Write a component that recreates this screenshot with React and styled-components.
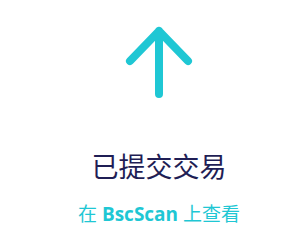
import React from "react";
import styled, { createGlobalStyle } from "styled-components";

const GlobalStyle = createGlobalStyle`
  html, body {
    margin: 0;
    padding: 0;
    background: #ffffff;
  }
`;

const Main = styled.div`
  display: flex;
  flex-direction: column;
  align-items: center;
  width: 308px;
  height: 241px;
  box-sizing: border-box;
  padding: 23px 0 0 10px;
  background: #ffffff;
`;

const ArrowIcon = styled.svg`
  display: block;
  width: 80px;
  height: 80px;
`;

const Title = styled.div`
  margin-top: 49px;
  font-family: "Noto Sans CJK SC", "Noto Sans", sans-serif;
  font-size: 27px;
  line-height: 27px;
  color: #1f1e55;
`;

const ViewLink = styled.a`
  margin-top: 26px;
  font-family: "Open Sans", "Noto Sans CJK SC", sans-serif;
  font-size: 19px;
  line-height: 19px;
  color: #1fc7d4;
  text-decoration: none;
  cursor: pointer;
  b {
    font-weight: 700;
  }
`;

function App() {
  return (
    <Main>
      <GlobalStyle />
      <ArrowIcon viewBox="0 0 80 80" fill="none">
        <path
          d="M40 71V8M11 38L40 8L69 38"
          stroke="#1fc7d4"
          strokeWidth="8"
          strokeLinecap="round"
          strokeLinejoin="round"
        />
      </ArrowIcon>
      <Title>已提交交易</Title>
      <ViewLink>
        在 <b>BscScan</b> 上查看
      </ViewLink>
    </Main>
  );
}

export default App;
